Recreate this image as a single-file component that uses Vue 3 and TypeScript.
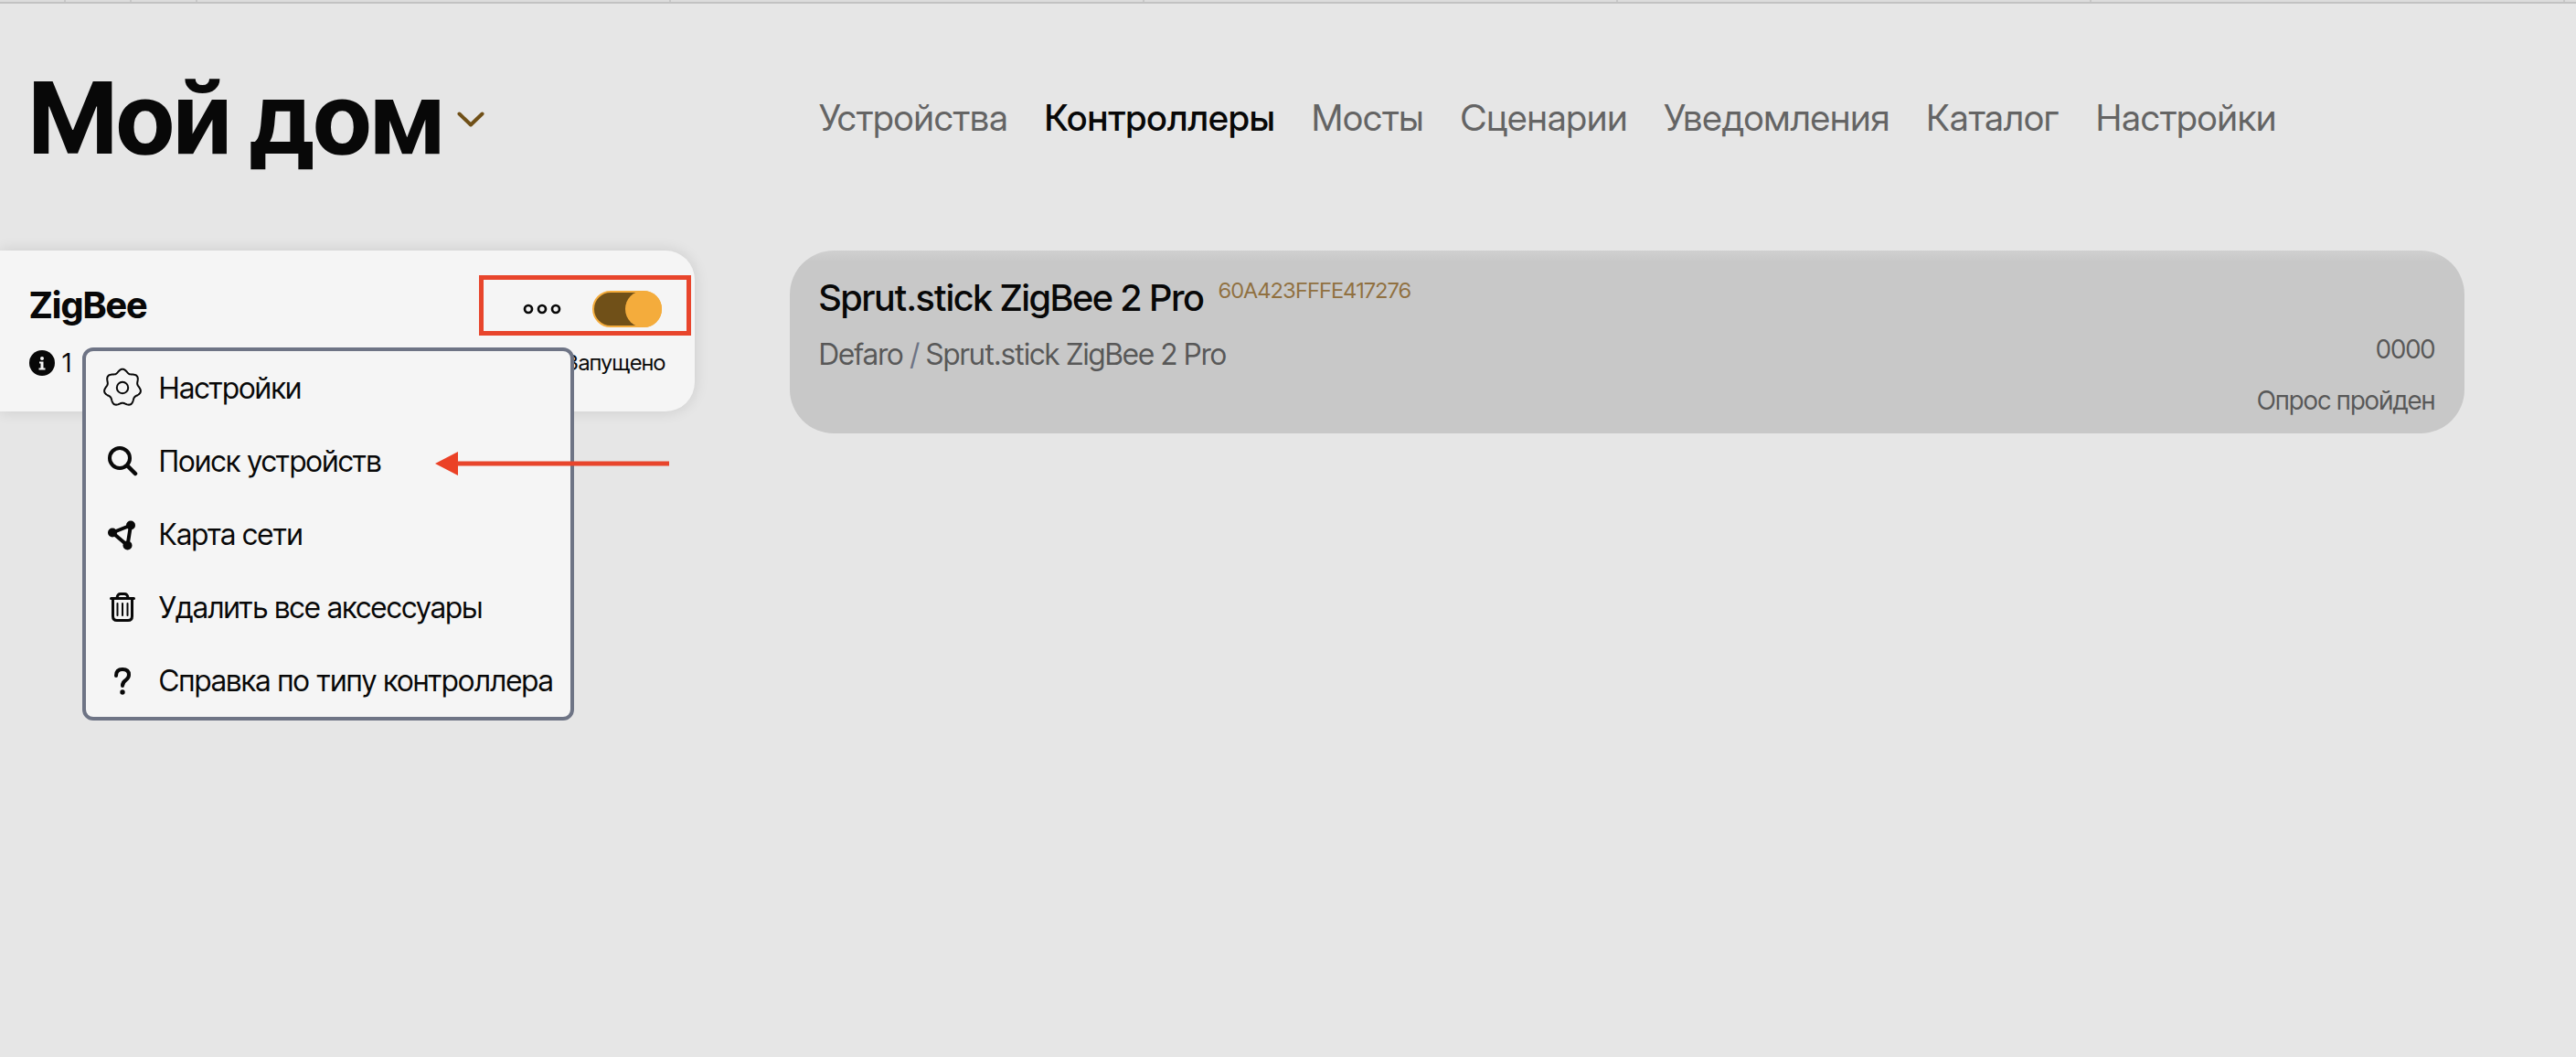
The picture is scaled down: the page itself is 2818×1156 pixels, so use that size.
<script setup lang="ts">
import { ref } from 'vue'

const nav = ['Устройства', 'Контроллеры', 'Мосты', 'Сценарии', 'Уведомления', 'Каталог', 'Настройки']
const current = ref('Контроллеры')
const running = ref(true)

const menu = [
  { icon: 'gear', label: 'Настройки' },
  { icon: 'search', label: 'Поиск устройств' },
  { icon: 'net', label: 'Карта сети' },
  { icon: 'trash', label: 'Удалить все аксессуары' },
  { icon: 'help', label: 'Справка по типу контроллера' },
]

// Seven-lobed outline of the settings icon
const gearPath = (() => {
  const pts: string[] = []
  for (let i = 0; i < 140; i++) {
    const a = (i / 140) * Math.PI * 2
    const r = 18.5 + 1.8 * Math.cos(7 * a)
    pts.push(`${(22 + r * Math.sin(a)).toFixed(2)} ${(22 - r * Math.cos(a)).toFixed(2)}`)
  }
  return `M${pts.join('L')}Z`
})()
</script>

<template>
  <div class="page">
    <div class="strip">
      <span v-for="n in 3" :key="`s${n}`" class="pinned"></span>
      <span v-for="n in 5" :key="`w${n}`" class="tab"></span>
    </div>
    <header class="header">
      <div class="side">
        <button class="home" type="button">
          <h1>Мой дом</h1>
          <svg width="30" height="22" viewBox="0 0 30 22" aria-hidden="true">
            <path d="M2.500 6.500L15 18.500L27.500 6.500" fill="none" stroke="#705018" stroke-width="4" stroke-linecap="round" stroke-linejoin="round" />
          </svg>
        </button>
      </div>
      <nav class="nav">
        <a v-for="item in nav" :key="item" href="#" :class="{ active: item === current }" @click.prevent="current = item">{{ item }}</a>
      </nav>
    </header>

    <main class="body">
      <section class="side">
        <div class="controller">
          <div class="row">
            <h2>ZigBee</h2>
            <div class="actions">
              <button class="dots" type="button" aria-label="Меню">
                <svg width="42" height="12" viewBox="0 0 42 12">
                  <g fill="none" stroke="#080808" stroke-width="2.700">
                    <circle cx="6" cy="6" r="4" />
                    <circle cx="21" cy="6" r="4" />
                    <circle cx="36" cy="6" r="4" />
                  </g>
                </svg>
              </button>
              <input v-model="running" class="toggle" type="checkbox" aria-label="Запущено" />
              <span class="frame"></span>
            </div>
          </div>
          <div class="row status">
            <span class="count">
              <svg width="28" height="28" viewBox="0 0 28 28" aria-hidden="true">
                <circle cx="14" cy="14" r="14" fill="#080808" />
                <circle cx="14" cy="9" r="2" fill="#f5f5f5" />
                <path d="M11 12.500H15.500V19.500H17.500V21.500H10.500V19.500H12.500V14.500H11Z" fill="#f5f5f5" />
              </svg>
              1
            </span>
            <span class="state">Запущено</span>
          </div>

          <ul class="menu">
            <li v-for="item in menu" :key="item.icon">
              <button type="button">
                <svg width="44" height="44" viewBox="0 0 44 44" aria-hidden="true" fill="none" stroke="#080808" stroke-linecap="round" stroke-linejoin="round">
                  <template v-if="item.icon === 'gear'">
                    <path :d="gearPath" stroke-width="2" />
                    <circle cx="22" cy="22" r="6.200" stroke-width="2" />
                  </template>
                  <template v-else-if="item.icon === 'search'">
                    <circle cx="19" cy="19" r="11" stroke-width="4" />
                    <path d="M27.500 27.500L36 36" stroke-width="4.500" />
                  </template>
                  <template v-else-if="item.icon === 'net'">
                    <path d="M11 20.500L31 12.500L27.500 34.500Z" stroke-width="4" />
                    <g fill="#080808" stroke="none">
                      <circle cx="11" cy="20.500" r="5" />
                      <circle cx="31" cy="12.500" r="5" />
                      <circle cx="27.500" cy="34.500" r="5" />
                    </g>
                  </template>
                  <template v-else-if="item.icon === 'trash'">
                    <path d="M9.500 12.500H34.500M11.500 13V32Q11.500 36.500 16 36.500H28Q32.500 36.500 32.500 32V13" stroke-width="3" />
                    <path d="M16 12Q16.500 7.500 20 7.500H24Q27.500 7.500 28 12" stroke-width="3" />
                    <path d="M16.500 18V31M22 18V31M27.500 18V31" stroke-width="2" />
                  </template>
                  <template v-else>
                    <path d="M15 17Q15 10 22 10Q29 10 29 16Q29 19 26 21.500Q22 24 22 28" stroke-width="4" />
                    <circle cx="22" cy="35" r="2.700" fill="#080808" stroke="none" />
                  </template>
                </svg>
                {{ item.label }}
              </button>
            </li>
          </ul>

          <svg class="arrow" width="256" height="26" viewBox="0 0 256 26" aria-hidden="true">
            <path d="M0 13L25 0V26Z" fill="#eb4126" />
            <path d="M24 13H256" stroke="#e8452c" stroke-width="5" />
          </svg>
        </div>
      </section>

      <section class="content">
        <article class="device">
          <div class="name">
            <h3>Sprut.stick ZigBee 2 Pro</h3>
            <span class="id">60A423FFFE417276</span>
          </div>
          <div class="model">Defaro <i>/</i> Sprut.stick ZigBee 2 Pro</div>
          <div class="info">
            <span>0000</span>
            <span>Опрос пройден</span>
          </div>
        </article>
      </section>
    </main>
  </div>
</template>

<style>
body {
  background: #e6e6e6;
}
</style>

<style scoped>
.page {
  min-height: 100vh;
  font-family: 'Inter Tight', Inter, sans-serif;
  color: #080808;
}
.page * {
  box-sizing: border-box;
}
h1,
h2,
h3 {
  margin: 0;
}
button {
  font: inherit;
  color: inherit;
  background: none;
  border: 0;
  padding: 0;
  cursor: pointer;
}
.strip {
  display: flex;
  overflow: hidden;
  height: 4px;
  background: #dcdcdc;
  border-bottom: 2px solid #c2c2c2;
}
.pinned,
.tab {
  flex: 0 0 72px;
  border-right: 2px solid #c8c8c8;
}
.tab {
  flex-basis: 518px;
}
.header {
  display: flex;
  align-items: center;
  height: 270px;
  padding-bottom: 20px;
}
.side {
  flex: 0 0 864px;
}
.home {
  display: flex;
  align-items: center;
  gap: 14px;
  padding-left: 32px;
}
h1 {
  font-size: 108px;
  line-height: 108px;
  font-weight: 700;
}
.nav {
  display: flex;
  gap: 40px;
  padding-left: 32px;
  font-family: 'Inter Display', Inter, sans-serif;
  font-size: 40px;
  line-height: 48px;
}
.nav a {
  color: #646464;
  text-decoration: none;
  white-space: nowrap;
}
.nav a.active {
  color: #080808;
  font-weight: 500;
}
.body {
  display: flex;
  align-items: flex-start;
}
.controller {
  position: relative;
  width: 760px;
  min-height: 176px;
  padding: 36px 32px 0;
  background: #f5f5f5;
  border-radius: 0 32px 32px 0;
  box-shadow: 0 0 16px rgba(0, 0, 0, 0.12);
}
.row {
  display: flex;
  align-items: center;
  justify-content: space-between;
}
h2 {
  font-size: 40px;
  line-height: 48px;
  font-weight: 700;
}
.actions {
  position: relative;
  display: flex;
  align-items: center;
  gap: 30px;
  padding: 8px 4px 0 0;
}
.dots {
  display: flex;
  padding: 4px;
}
.toggle {
  appearance: none;
  display: flex;
  width: 76px;
  height: 40px;
  margin: 0;
  border: 2px solid #f4ac3c;
  border-radius: 20px;
  background: #705018;
}
.toggle::before {
  content: '';
  width: 40px;
  height: 40px;
  margin: -2px;
  border-radius: 20px;
  background: #f4ac3c;
}
.toggle:checked::before {
  margin-left: auto;
}
.frame {
  position: absolute;
  left: -44px;
  right: -28px;
  top: -9px;
  bottom: -9px;
  border: 5px solid #e8452c;
  pointer-events: none;
}
.status {
  height: 36px;
  margin-top: 20px;
}
.count {
  display: flex;
  align-items: center;
  gap: 8px;
  padding-top: 2px;
  font-size: 28px;
}
.state {
  font-size: 24px;
}
.menu {
  position: absolute;
  left: 90px;
  top: 106px;
  width: 538px;
  margin: 0;
  padding: 0;
  list-style: none;
  background: #f5f5f5;
  border: 4px solid #6e7485;
  border-radius: 12px;
}
.menu button {
  display: flex;
  align-items: center;
  gap: 18px;
  width: 100%;
  height: 80px;
  padding-left: 18px;
  font-size: 32px;
  white-space: nowrap;
}
.arrow {
  position: absolute;
  left: 476px;
  top: 220px;
}
.content {
  flex: 1;
  padding-right: 122px;
}
.device {
  min-height: 200px;
  padding: 28px 32px 0;
  border-radius: 48px;
  background: linear-gradient(#d0d0d0, #c8c8c8 12px);
}
.name {
  display: flex;
  gap: 16px;
}
h3 {
  font-size: 40px;
  line-height: 48px;
  font-weight: 500;
}
.id {
  font-size: 24px;
  line-height: 32px;
  color: #907040;
}
.model {
  font-size: 32px;
  line-height: 40px;
  margin-top: 18px;
  color: #585858;
}
.model i {
  font-style: normal;
  color: #6e7485;
}
.info {
  display: flex;
  flex-direction: column;
  align-items: flex-end;
  gap: 20px;
  margin-top: -44px;
  font-size: 28px;
  line-height: 36px;
  color: #585858;
}
</style>
